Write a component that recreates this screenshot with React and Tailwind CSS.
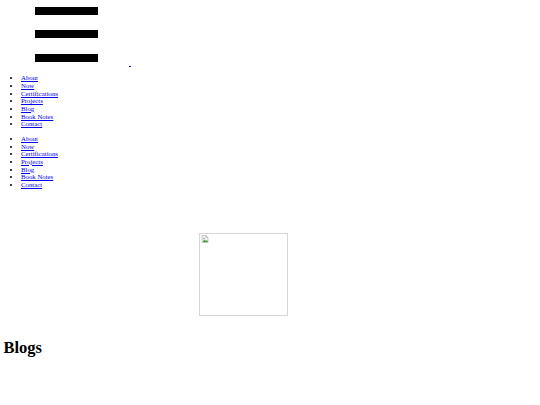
import React from "react";

const links = ["About", "Now", "Certifications", "Projects", "Blog", "Book Notes", "Contact"];

const NavList = () => (
  <ul className="list-disc pl-[17.6px] mt-[6.75px] text-[6.8px] leading-[7.7px]">
    {links.map((name) => (
      <li key={name}>
        <a href="#" className="text-[#0000ee] underline">
          {name}
        </a>
      </li>
    ))}
  </ul>
);

const BrokenImage = () => (
  <svg width="8" height="8" viewBox="0 0 16 16" className="ml-[1px] mt-[1px]">
    {/* page */}
    <path d="M2 1h8l4 4v10H2z" fill="#f4f4f4" stroke="#9a9a9a" strokeWidth="1" />
    <path d="M10 1v4h4" fill="none" stroke="#9a9a9a" strokeWidth="1" />
    {/* picture */}
    <path d="M3 14l4-5 3 3 2-2 2 4z" fill="#3c9a3c" />
    <circle cx="6" cy="7" r="1.5" fill="#5a8fd0" />
  </svg>
);

const App = () => {
  return (
    <div className="min-h-[405px] bg-white px-[3.4px] pt-[3.4px] text-black font-['Liberation_Serif',serif]">
      {/* header: hamburger + empty link */}
      <div className="flex items-start h-[64px]">
        <div className="flex flex-col gap-[15.5px] pt-[3.6px] ml-[31.6px]">
          <div className="w-[63px] h-[8px] bg-black" />
          <div className="w-[63px] h-[8px] bg-black" />
          <div className="w-[63px] h-[8px] bg-black" />
        </div>
        <span className="self-end ml-[31px] w-[2px] h-[1px] bg-[#0000ee]" />
      </div>

      <NavList />
      <NavList />

      {/* missing profile picture */}
      <div className="ml-[195.6px] mt-[44px] w-[89px] h-[83px] border border-[#d6d6d6]">
        <BrokenImage />
      </div>

      <h1 className="mt-[22px] text-[16.5px] font-bold leading-[19px]">Blogs</h1>
    </div>
  );
};

export default App;
